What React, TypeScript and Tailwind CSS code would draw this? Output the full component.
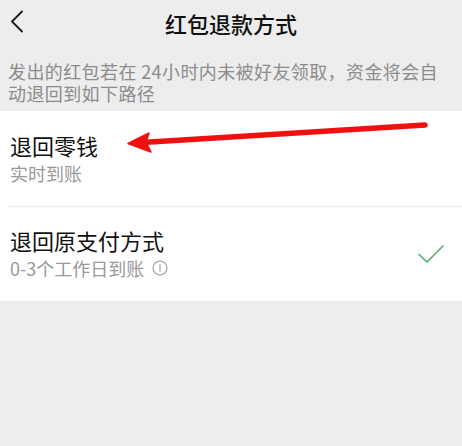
import React from "react";

const font = { fontFamily: '"Noto Sans CJK SC", "Noto Sans", sans-serif' };

function Check() {
  return (
    <svg width="28" height="22" viewBox="0 0 28 22" fill="none">
      <path d="M2 11.5 L10 19 L26 3" stroke="#5aae72" strokeWidth="1.7" strokeLinecap="round" strokeLinejoin="round" />
    </svg>
  );
}

function Info() {
  return (
    <svg width="16" height="16" viewBox="0 0 16 16" fill="none" className="ml-[8px]">
      <circle cx="8" cy="8" r="7" stroke="#9a9a9a" strokeWidth="1.1" />
      <line x1="8" y1="4.2" x2="8" y2="11.8" stroke="#9a9a9a" strokeWidth="1.1" />
    </svg>
  );
}

export default function App() {
  return (
    <div className="w-[462px] h-[446px] bg-[#ededed] overflow-hidden" style={font}>
      <div className="relative h-[44px] flex items-center justify-center">
        <svg className="absolute left-[10px] top-[10px]" width="14" height="24" viewBox="0 0 14 24" fill="none">
          <path d="M12 1.5 L2 11.5 L12 21.5" stroke="#1a1a1a" strokeWidth="1.8" strokeLinecap="round" strokeLinejoin="round" />
        </svg>
        <span className="text-[22px] leading-[30px] font-medium text-[#111] pt-[1px]">红包退款方式</span>
      </div>
      <div className="pl-[8px] pr-[16px] pt-[16px] pb-[7px] text-[18px] leading-[22px] tracking-[0.4px] text-[#8c8c8c]">
        发出的红包若在 24小时内未被好友领取，资金将会自动退回到如下路径
      </div>
      <div className="relative bg-white">
        <div className="h-[95px] flex flex-col justify-center px-[10px]">
          <div className="text-[22px] leading-[28px] text-[#111] -mt-[2px]">退回零钱</div>
          <div className="text-[18px] leading-[24px] text-[#999] mt-[2px]">实时到账</div>
        </div>
        <div className="ml-[8px] border-t border-[#ececec]" />
        <div className="h-[94px] flex items-center justify-between pl-[10px] pr-[17px]">
          <div className="flex flex-col">
            <div className="text-[22px] leading-[28px] text-[#111] -mt-[2px]">退回原支付方式</div>
            <div className="flex items-center text-[18px] leading-[24px] text-[#999] mt-[2px]">
              0-3个工作日到账
              <Info />
            </div>
          </div>
          <Check />
        </div>
        <svg className="absolute left-0 top-0 pointer-events-none" width="462" height="60" viewBox="0 0 462 60">
          <path d="M425 14 L142 31.5" stroke="#f01010" strokeWidth="5.5" strokeLinecap="round" />
          <path d="M128 32.5 L149 22 L146 31 L151 41 Z" fill="#f01010" stroke="#f01010" strokeWidth="1.5" strokeLinejoin="round" />
        </svg>
      </div>
    </div>
  );
}
